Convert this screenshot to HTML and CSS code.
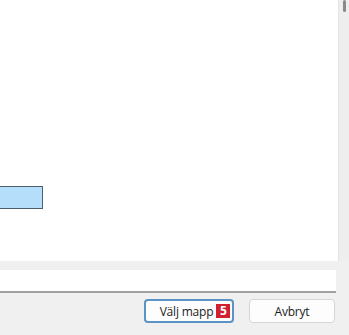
FILE: index.html
```html
<!DOCTYPE html>
<html lang="sv">
<head>
    <meta charset="UTF-8">
    <title>Välj mapp</title>
    <link rel="stylesheet" href="styles.css">
</head>
<body>
    <div class="dialog">
        <div class="browser">
            <div class="folder-view">
                <div class="selected-item"></div>
            </div>
            <div class="scrollbar"><div class="thumb"></div></div>
        </div>

        <div class="path-row">
            <input type="text" class="path-input" value="">
        </div>

        <div class="footer">
            <button class="btn primary"><span class="label">Välj mapp</span><span class="badge">5</span></button>
            <button class="btn">Avbryt</button>
        </div>
    </div>
</body>
</html>
```

FILE: styles.css
```css
html, body {
    margin: 0;
    padding: 0;
}

body {
    font-family: "Open Sans", "Liberation Sans", sans-serif;
    background-color: #f0f0f0;
    width: 349px;
    height: 335px;
    overflow: hidden;
}

.dialog {
    display: flex;
    flex-direction: column;
    height: 335px;
}

.browser {
    display: flex;
    height: 261px;
}

.folder-view {
    flex: 1;
    background-color: #fff;
    padding-top: 186px;
}

.selected-item {
    width: 42px;
    height: 21px;
    background-color: #b5defa;
    border: 1px solid #4d5f6c;
    border-left: none;
}

.scrollbar {
    width: 11px;
    background-color: #eeeeee;
    border-left: 1px solid #e4e4e4;
    display: flex;
    justify-content: flex-end;
    padding-right: 3px;
    box-sizing: border-box;
}

.thumb {
    width: 3px;
    height: 12px;
    background-color: #8a8a8a;
    border-radius: 2px;
}

.path-row {
    margin-top: 9px;
    padding-right: 13px;
}

.path-input {
    display: block;
    width: 100%;
    height: 23px;
    box-sizing: border-box;
    border: none;
    border-bottom: 2px solid #a0a0a0;
    background-color: #fff;
    outline: none;
}

.footer {
    display: flex;
    justify-content: flex-end;
    gap: 15px;
    padding: 6px 14px 0 0;
}

.btn {
    width: 86px;
    height: 24px;
    background-color: #fdfdfd;
    border: 1px solid #d5d5d5;
    border-radius: 4px;
    font-family: "Open Sans", "Liberation Sans", sans-serif;
    font-size: 12px;
    letter-spacing: -0.2px;
    color: #1b1b1b;
    padding: 0;
    white-space: nowrap;
    display: flex;
    align-items: center;
    justify-content: center;
    gap: 3px;
}

.btn.primary {
    width: 90px;
    border: 2px solid #5b93c4;
    padding-left: 12px;
}

.badge {
    background-color: #d1202f;
    color: #fff;
    font-weight: bold;
    font-size: 12px;
    line-height: 14px;
    width: 14px;
    height: 14px;
    text-align: center;
    letter-spacing: 0;
}
```
